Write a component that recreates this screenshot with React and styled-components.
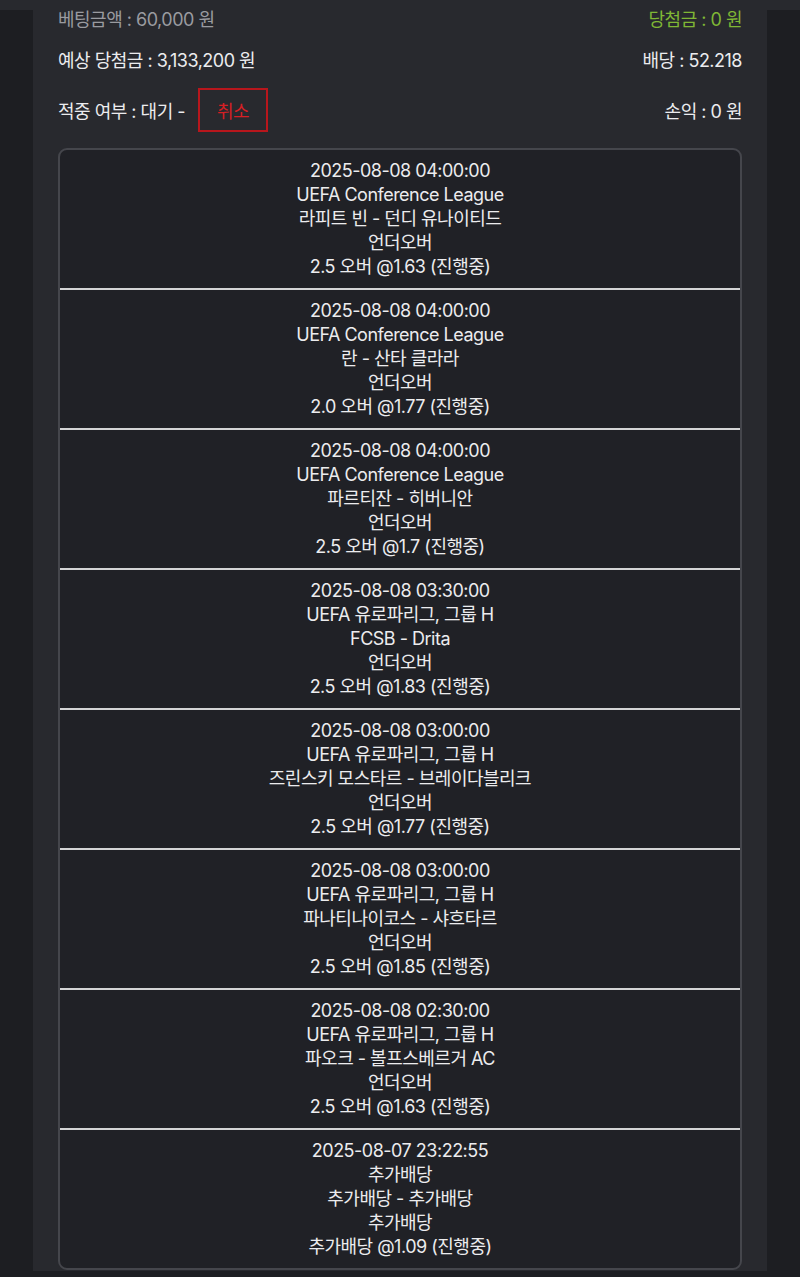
import React from "react";
import styled, { createGlobalStyle } from "styled-components";

const GlobalStyle = createGlobalStyle`
  html, body {
    margin: 0;
    padding: 0;
    background: #1d1e22;
  }
  body {
    font-family: Inter, "Noto Sans CJK KR", sans-serif;
    color: #ececee;
  }
`;

const bets = [
  {
    date: "2025-08-08 04:00:00",
    league: "UEFA Conference League",
    match: "라피트 빈 - 던디 유나이티드",
    market: "언더오버",
    pick: "2.5 오버 @1.63 (진행중)",
  },
  {
    date: "2025-08-08 04:00:00",
    league: "UEFA Conference League",
    match: "란 - 산타 클라라",
    market: "언더오버",
    pick: "2.0 오버 @1.77 (진행중)",
  },
  {
    date: "2025-08-08 04:00:00",
    league: "UEFA Conference League",
    match: "파르티잔 - 히버니안",
    market: "언더오버",
    pick: "2.5 오버 @1.7 (진행중)",
  },
  {
    date: "2025-08-08 03:30:00",
    league: "UEFA 유로파리그, 그룹 H",
    match: "FCSB - Drita",
    market: "언더오버",
    pick: "2.5 오버 @1.83 (진행중)",
  },
  {
    date: "2025-08-08 03:00:00",
    league: "UEFA 유로파리그, 그룹 H",
    match: "즈린스키 모스타르 - 브레이다블리크",
    market: "언더오버",
    pick: "2.5 오버 @1.77 (진행중)",
  },
  {
    date: "2025-08-08 03:00:00",
    league: "UEFA 유로파리그, 그룹 H",
    match: "파나티나이코스 - 샤흐타르",
    market: "언더오버",
    pick: "2.5 오버 @1.85 (진행중)",
  },
  {
    date: "2025-08-08 02:30:00",
    league: "UEFA 유로파리그, 그룹 H",
    match: "파오크 - 볼프스베르거 AC",
    market: "언더오버",
    pick: "2.5 오버 @1.63 (진행중)",
  },
  {
    date: "2025-08-07 23:22:55",
    league: "추가배당",
    match: "추가배당 - 추가배당",
    market: "추가배당",
    pick: "추가배당 @1.09 (진행중)",
  },
];

function App() {
  return (
    <>
      <GlobalStyle />
      <TopStrip />
      <Page>
        <Panel>
          <SummaryRow $height={16} $top={0}>
            <Label $color="#9a9ba0">베팅금액 : 60,000 원</Label>
            <Label $color="#7fb735">당첨금 : 0 원</Label>
          </SummaryRow>
          <SummaryRow $height={22} $top={22}>
            <Label>예상 당첨금 : 3,133,200 원</Label>
            <Label>배당 : 52.218</Label>
          </SummaryRow>
          <SummaryRow $height={44} $top={18}>
            <Left>
              <Label>적중 여부 : 대기 -</Label>
              <CancelButton>취소</CancelButton>
            </Left>
            <Label>손익 : 0 원</Label>
          </SummaryRow>
          <BetCard>
            {bets.map((b, i) => (
              <BetItem key={i} $last={i === bets.length - 1}>
                <Line>{b.date}</Line>
                <Line>{b.league}</Line>
                <Line>{b.match}</Line>
                <Line>{b.market}</Line>
                <Line>{b.pick}</Line>
              </BetItem>
            ))}
          </BetCard>
        </Panel>
      </Page>
    </>
  );
}

const TopStrip = styled.div`
  height: 10px;
  background: #28292e;
`;

const Page = styled.div`
  display: flex;
  justify-content: center;
  padding-bottom: 10px;
`;

const Panel = styled.div`
  width: 734px;
  background: #28292e;
  padding: 0 25px 1px;
  box-sizing: border-box;
  display: flex;
  flex-direction: column;
`;

const SummaryRow = styled.div`
  display: flex;
  justify-content: space-between;
  align-items: center;
  height: ${(p) => p.$height}px;
  margin-top: ${(p) => p.$top}px;
`;

const Left = styled.div`
  display: flex;
  align-items: center;
  gap: 13px;
`;

const Label = styled.span`
  font-size: 18px;
  letter-spacing: -0.5px;
  color: ${(p) => p.$color || "#ececee"};
`;

const CancelButton = styled.button`
  width: 70px;
  height: 44px;
  background: transparent;
  border: 2px solid #b8161c;
  color: #d61f24;
  font-family: inherit;
  font-size: 18px;
  letter-spacing: -0.5px;
  padding: 0;
  cursor: pointer;
`;

const BetCard = styled.div`
  margin-top: 16px;
  background: #202126;
  border: 2px solid #45464c;
  border-radius: 9px;
  overflow: hidden;
`;

const BetItem = styled.div`
  display: flex;
  flex-direction: column;
  align-items: center;
  padding: 9px 0 9px;
  border-bottom: ${(p) => (p.$last ? "none" : "2px solid #d4d4d6")};
`;

const Line = styled.div`
  font-size: 18px;
  line-height: 24px;
  letter-spacing: -0.5px;
  color: #ececee;
  text-align: center;
`;

export default App;
